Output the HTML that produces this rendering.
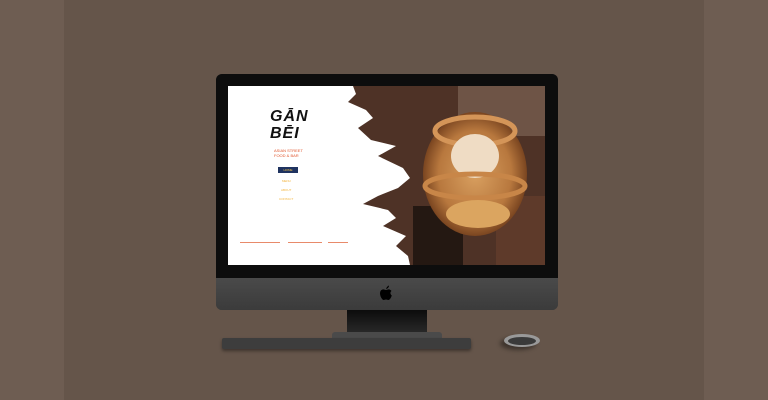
<!DOCTYPE html>
<html><head><meta charset="utf-8"><style>
*{margin:0;padding:0;box-sizing:border-box}
body{width:768px;height:400px;overflow:hidden;background:#6e5d52;position:relative;font-family:"Liberation Sans",sans-serif}
.band{position:absolute;left:64px;top:0;width:640px;height:400px;background:#65554a}
.abs{position:absolute}
</style></head><body>
<div class="band"></div>
<div class="abs" style="left:216px;top:74px;width:342px;height:236px;background:#3a3a3a;border-radius:6px"></div>
<div class="abs" style="left:216px;top:74px;width:342px;height:206px;background:#0d0d0d;border-radius:6px 6px 0 0"></div>
<div class="abs" style="left:216px;top:278px;width:342px;height:32px;background:linear-gradient(#4a4a4a,#3b3b3b);border-radius:0 0 6px 6px"></div>
<svg class="abs" style="left:379px;top:285px" width="14" height="16" viewBox="0 0 14 16"><path d="M7 4C8 1 10 0.5 10 0.5 10 2 9 3.5 7 4ZM3.5 4.5C5 4 6 5 7 5 8 5 9 4 10.5 4.5 12 5 12.5 6 12.5 6 11 7 11 9 12.8 10.5 12 13 10.5 15 9.5 15 8.5 15 8 14.5 7 14.5 6 14.5 5.5 15 4.5 15 3 15 1 11 1 8.5 1 6 2.3 4.8 3.5 4.5Z" fill="#000"/></svg>
<div class="abs" style="left:228px;top:86px;width:317px;height:179px;overflow:hidden;background:#4a3226">
 <svg class="abs" style="left:0;top:0" width="317" height="179">
  <defs><radialGradient id="g" cx="0.5" cy="0.5" r="0.5"><stop offset="0" stop-color="#d9a060"/><stop offset="0.7" stop-color="#b8783e"/><stop offset="1" stop-color="#7a4520"/></radialGradient></defs>
  <rect x="120" y="0" width="197" height="179" fill="#4e3226"/>
  <rect x="230" y="0" width="87" height="50" fill="#6e5446"/>
  <rect x="185" y="120" width="50" height="59" fill="#241812"/>
  <rect x="268" y="110" width="49" height="69" fill="#5e3a2a"/>
  <ellipse cx="247" cy="88" rx="52" ry="62" fill="url(#g)"/>
  <ellipse cx="247" cy="45" rx="40" ry="14" fill="none" stroke="#d49558" stroke-width="5"/>
  <ellipse cx="247" cy="70" rx="24" ry="22" fill="#efdcc4"/>
  <ellipse cx="247" cy="100" rx="50" ry="12" fill="none" stroke="#c88648" stroke-width="5"/>
  <ellipse cx="250" cy="128" rx="32" ry="14" fill="#dba560"/>
  <polygon points="0,0 125,0 128,8 120,16 138,24 145,32 130,42 143,54 168,60 150,70 175,82 182,92 170,102 150,110 135,118 160,124 168,132 155,140 178,150 168,160 180,170 182,179 0,179" fill="#fff"/>
 </svg>
 <div class="abs" style="left:42px;top:22px;font:italic bold 16px/17px 'Liberation Sans',sans-serif;color:#111;letter-spacing:1px">GĀN<br>BĒI</div>
 <div class="abs" style="left:46px;top:62px;font-size:4px;line-height:5px;color:#e0562e">ASIAN STREET<br>FOOD &amp; BAR</div>
 <div class="abs" style="left:50px;top:81px;width:20px;height:6px;background:#1f3360;color:#f2c14a;font-size:3px;text-align:center;line-height:6px">HOME</div>
 <div class="abs" style="left:54px;top:93px;font-size:3px;color:#f2b33a">MENU</div>
 <div class="abs" style="left:53px;top:102px;font-size:3px;color:#f2b33a">ABOUT</div>
 <div class="abs" style="left:51px;top:111px;font-size:3px;color:#f2b33a">CONTACT</div>
 <div class="abs" style="left:12px;top:156px;width:40px;height:1px;background:#e88a6a"></div>
 <div class="abs" style="left:60px;top:156px;width:34px;height:1px;background:#e88a6a"></div>
 <div class="abs" style="left:100px;top:156px;width:20px;height:1px;background:#e88a6a"></div>
</div>
<div class="abs" style="left:347px;top:310px;width:80px;height:24px;background:linear-gradient(#0c0c0c,#2a2a2a)"></div>
<div class="abs" style="left:332px;top:332px;width:110px;height:6px;background:#4a4a4a;border-radius:3px 3px 0 0"></div>
<div class="abs" style="left:222px;top:338px;width:249px;height:11px;background:#3d3d3d;border-radius:2px;box-shadow:0 2px 3px rgba(0,0,0,.4)"></div>
<div class="abs" style="left:504px;top:334px;width:36px;height:13px;background:#999;border-radius:50%;box-shadow:-4px 3px 4px rgba(0,0,0,.4)"></div>
<div class="abs" style="left:508px;top:337px;width:28px;height:8px;background:#3a3a3a;border-radius:50%"></div>
</body></html>
